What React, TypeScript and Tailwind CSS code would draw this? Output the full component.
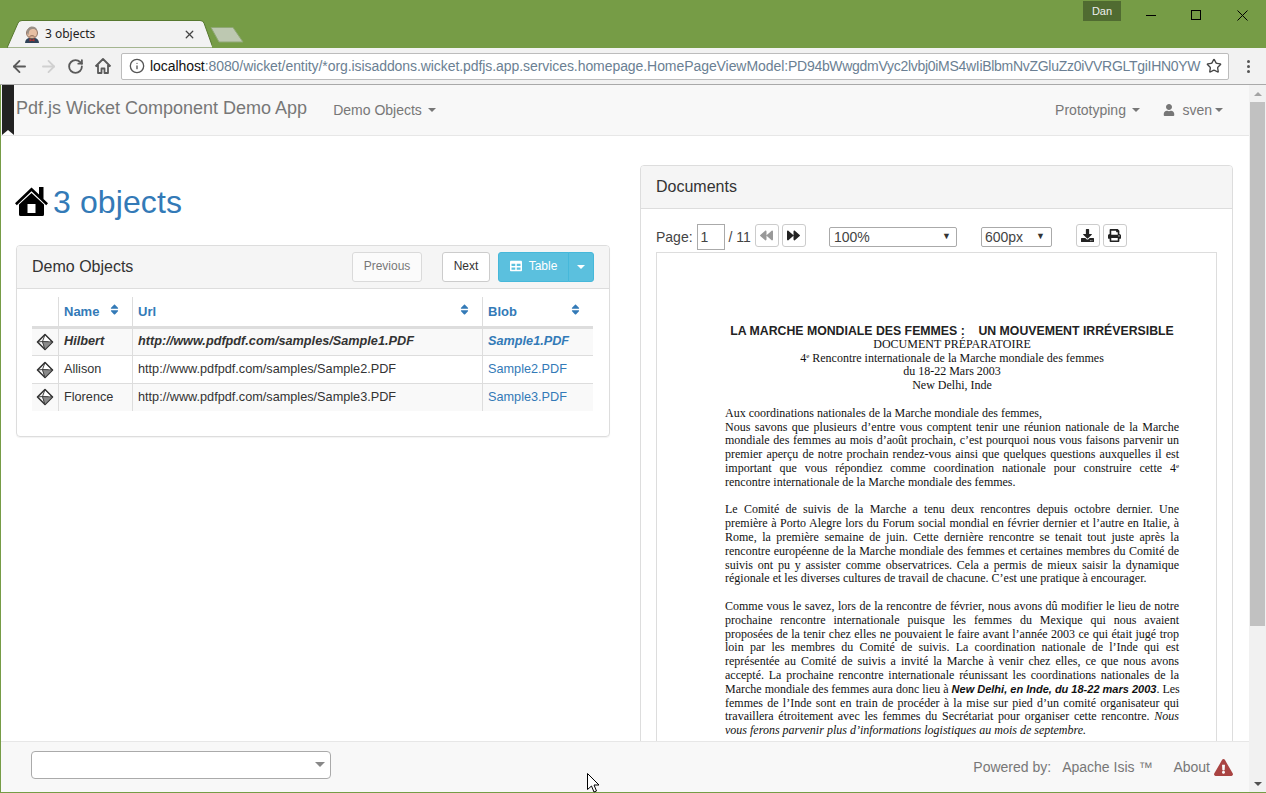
import React from "react";
import { ArrowLeft, ArrowRight, RotateCw, Star, Info, X } from "lucide-react";
import { FaUser, FaSort, FaTable, FaBackward, FaForward, FaDownload, FaPrint, FaExclamationTriangle } from "react-icons/fa";

function Caret({ className = "" }: { className?: string }) {
  return <span className={"inline-block w-0 h-0 border-x-[4px] border-x-transparent border-t-[4px] border-t-current " + className} />;
}

function Cube() {
  return (
    <svg width="18" height="18" viewBox="0 0 18 18" fill="none" stroke="#333" strokeWidth="1.6" strokeLinejoin="round">
      <path d="M9 1.500 16.500 9 9 16.500 1.500 9Z" />
      <path d="M9 1.500 6.500 8.500 16.500 9M1.500 9 6.500 8.500 9 16.500" strokeWidth=".9" />
      <path d="M6.500 8.500 16.500 9 9 16.500Z" fill="#8a8a8a" strokeWidth=".7" />
      <path d="M9 3 14.500 8.500 9 7.500Z" fill="#fff" stroke="none" />
    </svg>
  );
}

function HomeIcon() {
  return (
    <svg className="-ml-[1px] -mt-[2px]" width="33" height="31" viewBox="0 0 33 31" fill="#000">
      <path d="M0 17.200 16.500 1.500 24 8.600V1h4.500v11.900L33 17.200l-1.800 2L16.500 5.300 1.800 19.200Z" />
      <path d="M4 18.500 16.500 7 29 18.500V28.500a1.500 1.500 0 0 1-1.500 1.500H5.500A1.500 1.500 0 0 1 4 28.500ZM12.500 18v9h8v-9Z" fillRule="evenodd" />
    </svg>
  );
}

function Favicon() {
  return (
    <svg width="16" height="17" viewBox="0 0 16 17">
      <path d="M1 17c0-3 2-4.500 4-5l6 0c2 .5 4 2 4 5Z" fill="#2f4258" />
      <path d="M5.500 12.500l2.500 1.500 2.500-1.500 0 3-2.500-1-2.500 1Z" fill="#b8322a" />
      <circle cx="8" cy="7" r="5.500" fill="#e6bfa3" stroke="#6b4a3a" strokeWidth=".7" />
      <path d="M3 7c-.5-4 2.500-6.500 5-6.500s5 1.500 5.200 4C11 3 9 2.800 7.500 3.200 5.500 3.800 5 5 4.500 9Z" fill="#9a8f86" />
      <path d="M5.500 10.500c1.500-1 3.500-1 5 0" stroke="#6b4a3a" strokeWidth=".8" fill="none" />
    </svg>
  );
}

function Justified({ lines, last }: { lines: React.ReactNode[]; last: React.ReactNode }) {
  return (
    <div className="mb-[13.8px]">
      {lines.map((l, i) => (
        <div key={i} className="[text-align-last:justify] whitespace-nowrap">{l}</div>
      ))}
      <div>{last}</div>
    </div>
  );
}

function SortHead({ label }: { label: string }) {
  return (
    <th className="border-l border-[#ddd] border-b-[3px] border-b-[#ddd] h-[30px] text-left font-bold text-[#337ab7] pl-[5.5px] pr-[5px]">
      <div className="flex items-center justify-between pr-[8px]">
        <span>{label}</span>
        <FaSort className="text-[#337ab7] w-[9px] h-[13px] -mt-[3px]" />
      </div>
    </th>
  );
}

const rows = [
  { name: "Hilbert", n: 1, cls: "font-bold italic bg-[#f9f9f9]" },
  { name: "Allison", n: 2, cls: "bg-white [&>td]:pt-[2px]" },
  { name: "Florence", n: 3, cls: "bg-[#f9f9f9]" },
];

const toolBtn = "self-start mt-[1px] w-[24px] h-[23px] border border-[#ccc] rounded-[3px] flex items-center justify-center";

export default function App() {
  return (
    <div className="relative w-[1266px] h-[793px] overflow-hidden bg-[#769c46] flex flex-col font-['Liberation_Sans',Arial,sans-serif] text-[#333]">
      {/* Title bar / tabs */}
      <div className="h-[48px] shrink-0 flex items-end relative">
        <div className="relative w-[205px] h-[28px] ml-[7px] flex items-center">
          <svg className="absolute inset-0" width="205" height="28" viewBox="0 0 205 28">
            <path d="M0 28 L11 3 Q12 .5 15 .5 L193 .5 Q196 .5 197 3 L206 28Z" fill="#f2f2f2" stroke="#57782f" />
          </svg>
          <div className="relative flex items-center pl-[17px] pr-[16px] w-full">
            <Favicon />
            <span className="ml-[5px] text-[12px] text-[#222] font-['Noto_Sans',sans-serif]">3 objects</span>
            <X className="ml-auto text-[#444]" size={13} strokeWidth={2.4} />
          </div>
        </div>
        <svg className="mb-[5px] -ml-[2px]" width="34" height="16" viewBox="0 0 34 16">
          <path d="M1 .500 L23 .500 L33 15 L9 15Z" fill="#bdc8b1" stroke="#8fa775" strokeLinejoin="round" />
        </svg>
        <div className="absolute top-[1px] left-[1083px] w-[38px] h-[20px] bg-[#506b31] text-[#eee] text-[11px] flex items-center justify-center">Dan</div>
        <div className="absolute top-[15px] left-[1146px] w-[10px] h-[1px] bg-black" />
        <div className="absolute top-[10px] left-[1191px] w-[10px] h-[10px] border border-black" />
        <svg className="absolute top-[10px] left-[1237px]" width="11" height="11" viewBox="0 0 11 11" stroke="#000" strokeWidth="1">
          <path d="M.5.500l10 10M10.500.500l-10 10" />
        </svg>
      </div>

      {/* Browser toolbar */}
      <div className="h-[37px] shrink-0 bg-[#f2f2f2] border-b border-[#a9a9a9] flex items-center pl-[10px] pr-[10px]">
        <ArrowLeft size={19} className="text-[#5a5a5a]" strokeWidth={2.3} />
        <ArrowRight size={19} className="text-[#d0d0d0] ml-[10px]" strokeWidth={2.3} />
        <RotateCw size={17} className="text-[#5a5a5a] ml-[9px]" strokeWidth={2.6} />
        <svg className="ml-[10px]" width="18" height="18" viewBox="0 0 18 18" fill="none" stroke="#5a5a5a" strokeWidth="1.8" strokeLinejoin="round">
          <path d="M1.500 9.500 9 2l7.500 7.500M4 8v8h3.500v-4.500h3V16H14V8" />
        </svg>
        <div className="ml-[9px] w-[1108px] h-[27px] bg-white border border-[#bcbcbc] rounded-[2px] flex items-center pl-[7px] pr-[6px]">
          <Info size={16} className="text-[#555] shrink-0" strokeWidth={2} />
          <div className="ml-[5px] flex-1 overflow-hidden whitespace-nowrap text-[14px] tracking-[-0.07px] text-[#6b7f93]">
            <span className="text-[#111]">localhost</span>:8080/wicket/entity/*org.isisaddons.wicket.pdfjs.app.services.homepage.HomePageViewModel:<span className="tracking-[-0.29px]">PD94bWwgdmVyc2lvbj0iMS4wIiBlbmNvZGluZz0iVVRGLTgiIHN0YW</span>
          </div>
          <Star size={16} className="ml-[5px] text-[#444] shrink-0" strokeWidth={2} />
        </div>
        <div className="ml-[18px] flex flex-col gap-[2px]">
          <span className="w-[3px] h-[3px] rounded-full bg-[#555]" />
          <span className="w-[3px] h-[3px] rounded-full bg-[#555]" />
          <span className="w-[3px] h-[3px] rounded-full bg-[#555]" />
        </div>
      </div>

      {/* Page */}
      <div className="flex-1 min-h-0 flex ml-[1px] mb-[1px] bg-white">
        <div className="flex-1 min-w-0 flex flex-col">
          {/* Navbar */}
          <div className="relative h-[51px] shrink-0 bg-[#f8f8f8] border-b border-[#e7e7e7] flex items-center pl-[15px] pr-[26px] text-[#777]">
            <div className="absolute left-[1px] top-0 w-[12px] h-[50px] bg-[#222]">
              <div className="absolute bottom-0 left-0 w-0 h-0 border-x-[6px] border-x-transparent border-b-[5px] border-b-white" />
            </div>
            <span className="text-[18px] -mt-[4px]">Pdf.js Wicket Component Demo App</span>
            <span className="ml-[26px] text-[14px] flex items-center">Demo Objects<Caret className="ml-[6px]" /></span>
            <span className="ml-auto text-[14px] flex items-center">Prototyping<Caret className="ml-[6.5px]" /></span>
            <span className="ml-[23px] text-[14px] flex items-center"><FaUser className="mr-[7px]" size={12} />sven<Caret className="ml-[3px]" /></span>
          </div>

          {/* Main */}
          <div className="flex-1 min-h-0 overflow-hidden flex pl-[15px] pr-[16px] gap-[30px]">
            {/* Left */}
            <div className="w-[594px] shrink-0">
              <div className="flex items-center h-[46px] mt-[43px]">
                <HomeIcon />
                <span className="ml-[5px] text-[32px] tracking-[0.1px] text-[#337ab7]">3 objects</span>
              </div>
              <div className="mt-[20px] border border-[#ddd] rounded-[4px] h-[192px] shadow-[0_1px_1px_rgba(0,0,0,0.05)]">
                <div className="h-[43px] bg-[#f5f5f5] border-b border-[#ddd] rounded-t-[3px] flex items-center pl-[15px] pr-[15px]">
                  <span className="text-[16px]">Demo Objects</span>
                  <div className="ml-auto w-[70px] h-[30px] pb-[2px] border border-[#ccc] rounded-[3px] bg-white opacity-65 text-[12px] flex items-center justify-center">Previous</div>
                  <div className="ml-[20px] w-[48px] h-[30px] pb-[2px] border border-[#ccc] rounded-[3px] bg-white text-[12px] flex items-center justify-center">Next</div>
                  <div className="ml-[8px] h-[30px] flex text-white text-[12px]">
                    <div className="w-[71px] pb-[2px] bg-[#5bc0de] border border-[#46b8da] rounded-l-[3px] flex items-center justify-center">
                      <FaTable size={12} className="mr-[7px]" />Table
                    </div>
                    <div className="w-[26px] -ml-[1px] bg-[#5bc0de] border border-[#46b8da] rounded-r-[3px] flex items-center justify-center"><Caret /></div>
                  </div>
                </div>
                <div className="pt-[8px] pl-[15px] pr-[16px]">
                  <table className="w-[561px] table-fixed border-collapse text-[12.7px]">
                    <colgroup>
                      <col className="w-[26px]" />
                      <col className="w-[74px]" />
                      <col className="w-[350px]" />
                      <col className="w-[111px]" />
                    </colgroup>
                    <thead className="text-[13px]">
                      <tr>
                        <th className="border-b-[3px] border-b-[#ddd]" />
                        <SortHead label="Name" />
                        <SortHead label="Url" />
                        <SortHead label="Blob" />
                      </tr>
                    </thead>
                    <tbody>
                      {rows.map((r) => (
                        <tr key={r.n} className={"h-[28px] border-b border-[#ddd] last:border-b-0 " + r.cls}>
                          <td><div className="flex justify-center pl-[1px]"><Cube /></div></td>
                          <td className="border-l border-[#ddd] pl-[5.5px]">{r.name}</td>
                          <td className="border-l border-[#ddd] pl-[5.5px] whitespace-nowrap">http://www.pdfpdf.com/samples/Sample{r.n}.PDF</td>
                          <td className="border-l border-[#ddd] pl-[5.5px] text-[#337ab7]">Sample{r.n}.PDF</td>
                        </tr>
                      ))}
                    </tbody>
                  </table>
                </div>
              </div>
            </div>

            {/* Right */}
            <div className="w-[593px] shrink-0 mt-[29px] border border-[#ddd] rounded-t-[4px] h-[700px]">
              <div className="h-[43px] bg-[#f5f5f5] border-b border-[#ddd] rounded-t-[3px] flex items-center pl-[15px] text-[16px]">Documents</div>
              <div className="px-[15px]">
                <div className="h-[28px] mt-[14px] flex items-center text-[14px] text-[#444]">
                  <span>Page:</span>
                  <div className="ml-[4px] w-[28px] h-[26px] border border-[#aaa] bg-white flex items-center pl-[3px]">1</div>
                  <span className="ml-[4px]">/ 11</span>
                  <div className={"ml-[4px] text-[#999] " + toolBtn}><FaBackward size={13} /></div>
                  <div className={"ml-[3px] text-[#222] " + toolBtn}><FaForward size={13} /></div>
                  <div className="self-start mt-[4px] ml-[23px] w-[128px] h-[20px] border border-[#aaa] rounded-[2px] flex items-center justify-between pl-[4px] pr-[5px]"><span>100%</span><span className="text-[9px] text-[#333]">▼</span></div>
                  <div className="self-start mt-[4px] ml-[24px] w-[71px] h-[20px] border border-[#aaa] rounded-[2px] flex items-center justify-between pl-[3px] pr-[6px]"><span>600px</span><span className="text-[9px] text-[#333]">▼</span></div>
                  <div className={"ml-[24px] text-[#222] " + toolBtn}><FaDownload size={13} /></div>
                  <div className={"ml-[3px] text-[#222] " + toolBtn}><FaPrint size={13} /></div>
                </div>
                <div className="mt-[1px] border border-[#ddd] border-b-0 bg-white h-[600px] pt-[72px] pl-[68px] pr-[37px] font-['Liberation_Serif',serif] text-[12px] leading-[13.8px] text-[#111]">
                  <div className="text-center">
                    <div className="font-bold font-['Liberation_Sans',sans-serif] text-[12.3px] leading-[12.8px] text-[#222] whitespace-pre">LA MARCHE MONDIALE DES FEMMES :    UN MOUVEMENT IRRÉVERSIBLE</div>
                    <div>DOCUMENT PRÉPARATOIRE</div>
                    <div>4<sup className="text-[7px]">e</sup> Rencontre internationale de la Marche mondiale des femmes</div>
                    <div>du 18-22 Mars 2003</div>
                    <div className="mb-[13.8px]">New Delhi, Inde</div>
                  </div>
                  <div>Aux coordinations nationales de la Marche mondiale des femmes,</div>
                  <Justified
                    lines={[
                      "Nous savons que plusieurs d’entre vous comptent tenir une réunion nationale de la Marche",
                      "mondiale des femmes au mois d’août prochain, c’est pourquoi nous vous faisons parvenir un",
                      "premier aperçu de notre prochain rendez-vous ainsi que quelques questions auxquelles il est",
                      <>important que vous répondiez comme coordination nationale pour construire cette 4<sup className="text-[7px]">e</sup></>,
                    ]}
                    last="rencontre internationale de la Marche mondiale des femmes."
                  />
                  <Justified
                    lines={[
                      "Le Comité de suivis de la Marche a tenu deux rencontres depuis octobre dernier. Une",
                      "première à Porto Alegre lors du Forum social mondial en février dernier et l’autre en Italie, à",
                      "Rome, la première semaine de juin. Cette dernière rencontre se tenait tout juste après la",
                      "rencontre européenne de la Marche mondiale des femmes et certaines membres du Comité de",
                      "suivis ont pu y assister comme observatrices. Cela a permis de mieux saisir la dynamique",
                    ]}
                    last="régionale et les diverses cultures de travail de chacune. C’est une pratique à encourager."
                  />
                  <Justified
                    lines={[
                      "Comme vous le savez, lors de la rencontre de février, nous avons dû modifier le lieu de notre",
                      "prochaine rencontre internationale puisque les femmes du Mexique qui nous avaient",
                      "proposées de la tenir chez elles ne pouvaient le faire avant l’année 2003 ce qui était jugé trop",
                      "loin par les membres du Comité de suivis. La coordination nationale de l’Inde qui est",
                      "représentée au Comité de suivis a invité la Marche à venir chez elles, ce que nous avons",
                      "accepté. La prochaine rencontre internationale réunissant les coordinations nationales de la",
                      <>Marche mondiale des femmes aura donc lieu à <b className="italic font-['Liberation_Sans',sans-serif] text-[11px]">New Delhi, en Inde, du 18-22 mars 2003</b>. Les</>,
                      "femmes de l’Inde sont en train de procéder à la mise sur pied d’un comité organisateur qui",
                      <>travaillera étroitement avec les femmes du Secrétariat pour organiser cette rencontre. <i>Nous</i></>,
                    ]}
                    last={<i>vous ferons parvenir plus d’informations logistiques au mois de septembre.</i>}
                  />
                </div>
              </div>
            </div>
          </div>

          {/* Footer */}
          <div className="h-[51px] shrink-0 bg-[#f8f8f8] border-t border-[#e7e7e7] flex items-center pl-[30px] pr-[16px] text-[14px] text-[#777]">
            <div className="w-[300px] h-[28px] -mt-[5px] bg-white border border-[#aaa] rounded-[4px] flex items-center justify-end pr-[5px]">
              <span className="w-0 h-0 border-x-[5px] border-x-transparent border-t-[5px] border-t-[#888]" />
            </div>
            <span className="ml-auto">Powered by:</span>
            <span className="ml-[11px]">Apache Isis ™</span>
            <span className="ml-[21px]">About</span>
            <FaExclamationTriangle className="ml-[4px] text-[#a94442]" size={19} />
          </div>
        </div>

        {/* Scrollbar */}
        <div className="w-[17px] shrink-0 bg-[#f1f1f1] flex flex-col items-center">
          <div className="h-[17px] flex items-center justify-center"><span className="w-0 h-0 border-x-[4px] border-x-transparent border-b-[4px] border-b-[#a3a3a3]" /></div>
          <div className="w-[15px] h-[524px] bg-[#c1c1c1]" />
          <div className="mt-auto h-[17px] flex items-center justify-center"><span className="w-0 h-0 border-x-[4px] border-x-transparent border-t-[4px] border-t-[#505050]" /></div>
        </div>
      </div>

      {/* Mouse cursor */}
      <svg className="absolute left-[587px] top-[773px]" width="13" height="20" viewBox="0 0 13 20">
        <path d="M.5.500v16l4-3.500 2.500 6 2.500-1-2.500-6H12Z" fill="#fff" stroke="#000" strokeWidth="1" />
      </svg>
    </div>
  );
}
